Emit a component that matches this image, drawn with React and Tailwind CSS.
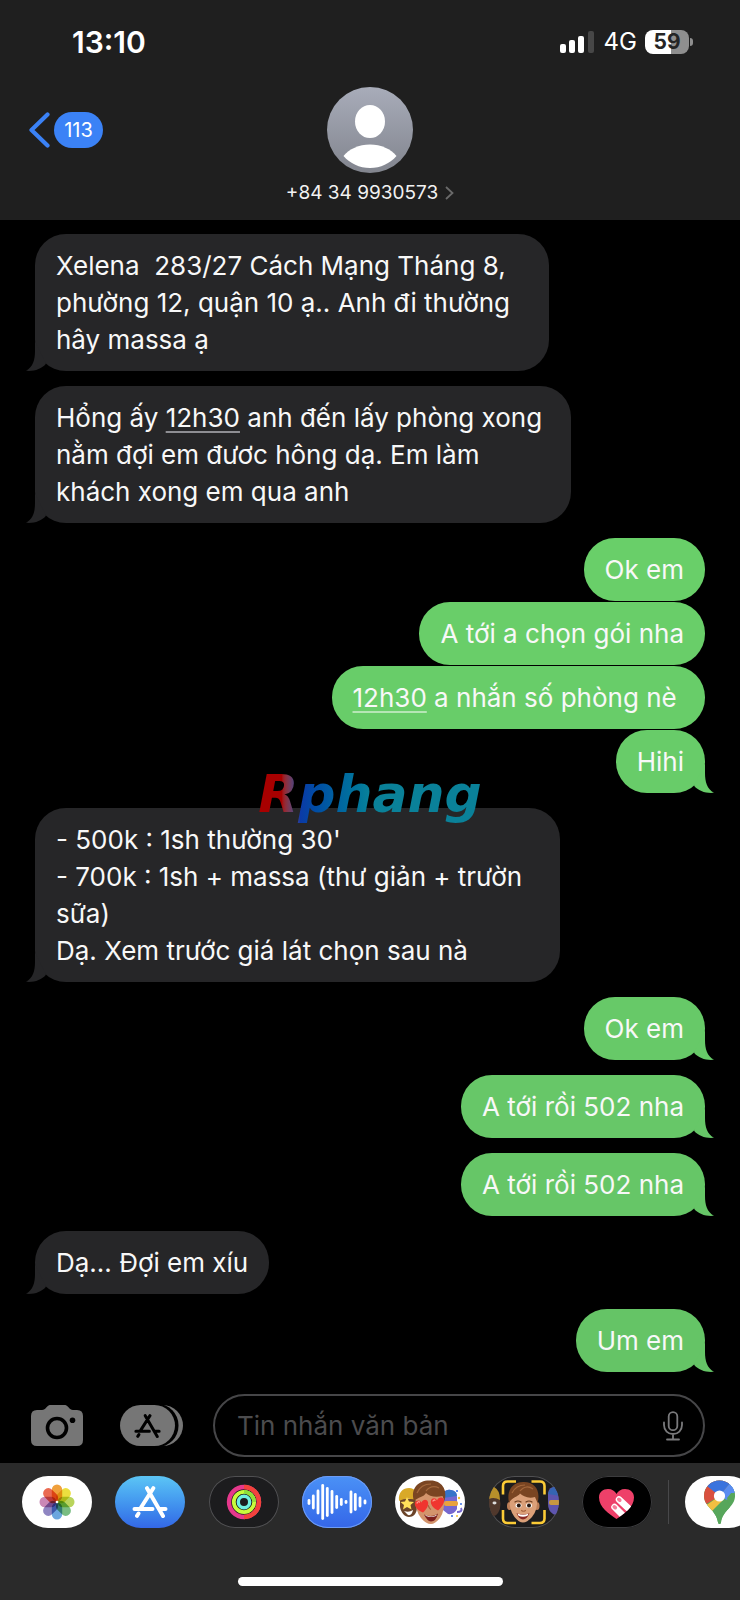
const thread = [
  { from: 'them', tail: true, width: 'w-[514px]', shade: 'bg-[#262628] text-[#262628]', lines: ['Xelena  283/27 Cách Mạng Tháng 8,', 'phường 12, quận 10 ạ.. Anh đi thường', 'hây massa ạ'] },
  { from: 'them', tail: true, width: 'w-[536px]', shade: 'bg-[#262628] text-[#262628]', lines: ['Hổng ấy {12h30} anh đến lấy phòng xong', 'nằm đợi em đươc hông dạ. Em làm', 'khách xong em qua anh'] },
  { from: 'me', shade: 'bg-[#69cf69] text-[#69cf69]', lines: ['Ok em'] },
  { from: 'me', joined: true, shade: 'bg-[#69ce69] text-[#69ce69]', lines: ['A tới a chọn gói nha'] },
  { from: 'me', joined: true, shade: 'bg-[#68cd69] text-[#68cd69]', lines: ['{12h30} a nhắn số phòng nè '] },
  { from: 'me', joined: true, tail: true, shade: 'bg-[#68cc69] text-[#68cc69]', lines: ['Hihi'] },
  { from: 'them', tail: true, watermark: true, width: 'w-[525px]', shade: 'bg-[#262628] text-[#262628]', lines: ["- 500k : 1sh thường 30'", '- 700k : 1sh + massa (thư giản + trườn', 'sữa)', 'Dạ. Xem trước giá lát chọn sau nà'] },
  { from: 'me', tail: true, shade: 'bg-[#67c968] text-[#67c968]', lines: ['Ok em'] },
  { from: 'me', tail: true, shade: 'bg-[#67c768] text-[#67c768]', lines: ['A tới rồi 502 nha'] },
  { from: 'me', tail: true, shade: 'bg-[#66c667] text-[#66c667]', lines: ['A tới rồi 502 nha'] },
  { from: 'them', tail: true, shade: 'bg-[#262628] text-[#262628]', lines: ['Dạ... Đợi em xíu'] },
  { from: 'me', tail: true, shade: 'bg-[#65c466] text-[#65c466]', lines: ['Um em'] },
];

function StatusBar() {
  return (
    <div className="flex h-14 items-end justify-between pl-[72px] pr-[47px]">
      <span className="text-[30px] leading-7 font-semibold text-white">13:10</span>
      <div className="flex h-7 items-center">
        <svg className="h-[22px] w-[34px]" viewBox="0 0 34 22" fill="#fff" aria-hidden="true">
          <rect x="0" y="13" width="6" height="9" rx="2" />
          <rect x="9" y="9" width="6" height="13" rx="2" />
          <rect x="18" y="5" width="6" height="17" rx="2" />
          <rect x="28" y="0" width="6" height="22" rx="2" fill="#474747" />
        </svg>
        <span className="ml-[10px] text-2xl leading-7 text-white">4G</span>
        <div className="ml-2 flex h-6 w-11 items-center justify-center rounded-lg bg-linear-to-r from-white from-59% to-[#8f8f8f] to-59%">
          <span className="text-[21px] leading-6 font-bold text-[#252525]">59</span>
        </div>
        <div className="ml-px h-2 w-[3px] rounded-r-full bg-[#8f8f8f]" />
      </div>
    </div>
  );
}

function Avatar() {
  return (
    <svg className="size-[86px]" viewBox="0 0 86 86" aria-hidden="true">
      <defs>
        <linearGradient id="avatar" x1="0" y1="0" x2="0" y2="1">
          <stop offset="0" stopColor="#a8acb9" />
          <stop offset="1" stopColor="#82858e" />
        </linearGradient>
      </defs>
      <circle cx="43" cy="43" r="43" fill="url(#avatar)" />
      <ellipse cx="43" cy="34.5" rx="15" ry="16.5" fill="#fff" />
      <path d="M16.5 69C22 62 32 57.5 43 57.5S64 62 69.5 69C63 76.5 53.5 81 43 81S23 76.5 16.5 69Z" fill="#fff" />
    </svg>
  );
}

function Header() {
  return (
    <header className="bg-[#1f1f1f] pb-[15px]">
      <StatusBar />
      <div className="mt-[31px] grid grid-cols-[1fr_auto_1fr] items-start">
        <button type="button" aria-label="Back, 113 unread" className="ml-[29px] flex h-[86px] items-center gap-1 justify-self-start">
          <svg className="h-9 w-[21px]" viewBox="0 0 21 36" fill="none" stroke="#3b82f6" strokeWidth="4.2" strokeLinecap="round" strokeLinejoin="round">
            <path d="M18.5 2.5 2.5 18 18.5 33.5" />
          </svg>
          <span className="flex h-9 w-[49px] items-center justify-center rounded-full bg-[#3b82f6] text-xl text-white">113</span>
        </button>
        <button type="button" className="flex flex-col items-center">
          <Avatar />
          <span className="mt-2 flex items-center gap-[6px] text-[19px] leading-6 text-[#f2f2f2]">
            +84 34 9930573
            <svg className="h-4 w-[10px]" viewBox="0 0 10 16" fill="none" stroke="#6a6a6a" strokeWidth="1.8">
              <path d="M2 2 8.5 8 2 14" />
            </svg>
          </span>
        </button>
      </div>
    </header>
  );
}

function Tail({ mine }) {
  return (
    <svg
      className={mine ? 'absolute bottom-0 -right-[9px] size-[30px]' : 'absolute bottom-0 -left-[9px] size-[30px] -scale-x-100'}
      viewBox="0 0 30 30"
      fill="currentColor"
      aria-hidden="true"
    >
      <path d="M21 0V10C21 19 23 26 30 29.8C22 30.6 14.5 28 10 22.7Z" />
    </svg>
  );
}

// {braces} mark a detected time, shown as an underlined link
function Line({ text, mine }) {
  return (
    <span className="block whitespace-pre">
      {text.split(/[{}]/).map((part, i) =>
        i % 2 ? (
          <a key={i} href="#time" className={mine ? 'underline decoration-[#b5e6b5] decoration-2 underline-offset-4' : 'underline decoration-[#8e8e93] decoration-2 underline-offset-4'}>
            {part}
          </a>
        ) : (
          part
        )
      )}
    </span>
  );
}

function Watermark() {
  return (
    <div className="pointer-events-none absolute inset-x-0 -top-[46px] flex justify-center">
      <span className="bg-linear-to-r from-[#a80000] from-12% via-[#0b3aa6] via-20% to-[#0a8199] to-50% bg-clip-text px-1 font-['DejaVu_Sans',sans-serif] text-[52px] leading-[64px] font-bold text-transparent italic">
        Rphang
      </span>
    </div>
  );
}

function Message({ from, lines, shade, width = '', tail, joined, watermark }) {
  const mine = from === 'me';
  return (
    <li className={`relative flex px-[35px] ${mine ? 'justify-end' : ''} ${joined ? 'mt-px' : 'mt-[15px]'}`}>
      <div className={`relative rounded-[31px] px-[21px] py-[13px] ${width} ${shade}`}>
        {tail && <Tail mine={mine} />}
        <p className="relative text-[26px] leading-[37px] text-[#f8f8f8]">
          {lines.map((line) => (
            <Line key={line} text={line} mine={mine} />
          ))}
        </p>
      </div>
      {watermark && <Watermark />}
    </li>
  );
}

function StoreGlyph({ className }) {
  return (
    <svg className={className} viewBox="0 0 36 32" fill="none" stroke="currentColor" strokeWidth="4" strokeLinecap="round" aria-hidden="true">
      <path d="M21.3 2.2 9 21.5M15 2.2 31 30M2.5 23H20.5M28 23H33.5M6.5 27.5 5 29.8" />
    </svg>
  );
}

function Composer() {
  return (
    <form className="flex items-center pt-[22px] pr-[35px] pb-[6px] pl-[31px]">
      <button type="button" aria-label="Camera">
        <svg className="h-[41px] w-[52px]" viewBox="0 0 52 41">
          <path d="M6 5H11C13 5 14 4 15.5 2.2C17 .5 18 0 20 0H33C35 0 36 .5 37.5 2.2C39 4 40 5 42 5H46Q52 5 52 11V35Q52 41 46 41H6Q0 41 0 35V11Q0 5 6 5Z" fill="#767676" />
          <circle cx="26" cy="23" r="9.5" fill="none" stroke="#000" strokeWidth="3.6" />
          <circle cx="41.5" cy="15.3" r="2.8" />
        </svg>
      </button>
      <button type="button" aria-label="Apps" className="ml-[37px] grid items-center">
        <svg className="col-start-1 row-start-1 h-[41px] w-[63px]" viewBox="0 0 63 41">
          <rect x="8" width="55" height="41" rx="20.5" fill="#767676" />
          <rect x="3.5" y="-1" width="55" height="43" rx="21" />
          <rect width="55" height="41" rx="20.5" fill="#767676" />
        </svg>
        <StoreGlyph className="col-start-1 row-start-1 ml-[14px] h-6 w-[27px] text-black" />
      </button>
      <label className="ml-[30px] flex h-[63px] min-w-0 flex-1 items-center rounded-full border-2 border-[#464648] pr-5 pl-[22px]">
        <input
          type="text"
          aria-label="Tin nhắn văn bản"
          placeholder="Tin nhắn văn bản"
          className="min-w-0 flex-1 bg-transparent text-[26px] leading-[37px] text-white outline-none placeholder:text-[#4c4c4e]"
        />
        <svg className="h-[30px] w-5" viewBox="0 0 20 30" fill="none" stroke="#7a7a7c" strokeWidth="1.8" strokeLinecap="round">
          <rect x="5.7" y="1.2" width="8.6" height="18" rx="4.3" />
          <path d="M1 11.5V14C1 19.5 5 23 10 23S19 19.5 19 14V11.5M10 23V28.5M4 28.5H16" />
        </svg>
      </label>
    </form>
  );
}

const petals = ['#f0a03c', '#ecdf3f', '#b9d45c', '#79bd82', '#6ba6de', '#8f86c2', '#ca88b6', '#ea6a52'];

function PhotosIcon() {
  return (
    <svg viewBox="0 0 70 52" className="isolate size-full">
      <g transform="translate(35 26)">
        {petals.map((color, i) => (
          <rect key={color} x="-5.2" y="-17.5" width="10.4" height="17" rx="5.2" fill={color} transform={`rotate(${i * 45})`} className="mix-blend-multiply" />
        ))}
        <circle r="1.3" fill="#fff" />
      </g>
    </svg>
  );
}

function RingsIcon() {
  return (
    <svg viewBox="0 0 70 52" className="size-full" fill="none">
      <circle cx="35" cy="26" r="15" stroke="#e6388c" strokeWidth="4.4" />
      <path d="M35 11A15 15 0 0 1 35 41" stroke="#f2423c" strokeWidth="4.4" />
      <circle cx="35" cy="26" r="10.2" stroke="#c8fb3c" strokeWidth="3.8" />
      <path d="M35 15.8A10.2 10.2 0 0 1 45.2 26" stroke="#8fe03a" strokeWidth="3.8" />
      <circle cx="35" cy="26" r="5.7" stroke="#6ff0e0" strokeWidth="3.4" />
    </svg>
  );
}

const wave = [[7, 6], [11.3, 15], [16, 25], [20.7, 36], [25.3, 30], [30, 24], [34.7, 14], [39.3, 8], [44, 4], [49, 23], [53.3, 18], [58, 11], [63, 5]];

function AudioIcon() {
  return (
    <svg viewBox="0 0 70 52" className="size-full" fill="#fff">
      {wave.map(([x, h]) => (
        <rect key={x} x={x - 1.4} y={26 - h / 2} width="2.8" height={h} rx="1.4" />
      ))}
    </svg>
  );
}

function HeartEyesIcon() {
  return (
    <svg viewBox="0 0 70 52" className="size-full">
      <path d="M5 23H22V31C22 38 18 41 14 41S6 37 5 31Z" fill="#6b4429" />
      <path d="M4 25C3 16 8 12 14 12S24 17 23 25C17 22 10 22 4 25Z" fill="#d9a928" />
      <path d="M12 21 14 25.5 19 26 15.5 29 16.5 33.5 12 31 8 33.5 9 29 5.5 26 10 25.5Z" fill="#ffdf5a" />
      <path d="M9 35Q14 37 18 34Q17 40 13 39Z" fill="#fff" />
      <path d="M48 18Q50 13 56 14T62 21V33Q59 39 53 38L48 34Z" fill="#7668cf" />
      <path d="M48 19Q50 13 56 14T62 20L48 22Z" fill="#3674c9" />
      <rect x="49" y="25" width="14" height="5" rx="2" fill="#e9a23c" />
      <path d="M62 36Q68 36 66 32" fill="none" stroke="#7668cf" strokeWidth="2" />
      <g fill="#3c6fe0">
        <circle cx="62" cy="15" r="1.1" />
        <circle cx="57" cy="40" r="1.1" />
        <circle cx="66" cy="28" r="1" />
      </g>
      <g fill="#f2c230">
        <circle cx="64" cy="22" r="1.2" />
        <circle cx="62" cy="40" r="1" />
      </g>
      <path d="M20.5 21Q21 10 34 9T49 21Q50 35 45 42Q40 48 36 48Q31 48 26 42Q20 35 20.5 21Z" fill="#d3946c" />
      <path d="M19 25C15 12 24 4 35 4.5C46 4 53 13 49.5 25L47.5 20C40 22 34 20 31 17C29 21 23 21 19 25Z" fill="#7a4522" />
      <path d="M22 17C25 10 31 8 36 8M31 15C35 10 40 10 44 12" fill="none" stroke="#a4683c" strokeWidth="1.2" />
      <path d="M33 29Q34.5 33 36 33.5" fill="none" stroke="#a8643f" strokeWidth="1.2" />
      <path d="M29 38.5Q37 42 43 37.5Q41 45.5 36 45.5Q32 45 29 38.5Z" fill="#7c1f1d" />
      <path d="M30 39Q37 42 42 38.5L41 40Q36 42 31 40Z" fill="#fff" />
      <path d="M28 36.5C22 34 19 30 20 26.5C21 24 25 23.5 26.5 26.5C28 23 32 23 33 26C34 29.5 31 34 28 36.5Z" fill="#f0352f" />
      <path d="M43 34.5C38 32 35 28 36 24.5C37 21.5 41 21.5 42 24.5C43 21 47.5 20.5 49 23.5C50 27 46 32 43 34.5Z" fill="#f0352f" />
      <path d="M22 27Q23.5 25 24.5 26M38 25Q39 23.5 40 24.2" fill="none" stroke="#ff9a8d" strokeWidth="1.3" strokeLinecap="round" />
    </svg>
  );
}

function MemojiIcon() {
  return (
    <svg viewBox="0 0 70 52" className="size-full">
      <ellipse cx="4" cy="28" rx="7.5" ry="12" fill="#50382c" />
      <path d="M-2 24C-2 14 1 11 5 11Q11 14 11 24Q4 20-2 24Z" fill="#b8902a" />
      <ellipse cx="5.5" cy="27" rx="2" ry="1.4" fill="#ddd" />
      <path d="M59 17Q60 11 65 11T72 18V34Q68 40 64 38Q59 35 59 28Z" fill="#5e55ae" />
      <path d="M59 18Q61 11 66 11L72 20Z" fill="#3565b2" />
      <rect x="60" y="24" width="12" height="5" rx="2" fill="#c69840" />
      <ellipse cx="20.5" cy="30" rx="2.5" ry="4" fill="#bd7f58" />
      <ellipse cx="48" cy="30" rx="2.5" ry="4" fill="#bd7f58" />
      <path d="M20.5 22Q22 13 34 12T48 22Q49 34 43 41Q38 46.5 34 46.5Q30 46.5 25.5 41Q20 34 20.5 22Z" fill="#dba079" />
      <path d="M20 27C17 13 25 5.5 35 6C46 6 52 15 48.5 27L46 21C39 23 34 20 31 17.5C29 21 23 21 20 27Z" fill="#7a4522" />
      <path d="M23 17C26 11 31 9 36 9M31 15C35 10 40 10 44 13" fill="none" stroke="#a4683c" strokeWidth="1.2" />
      <path d="M26 26Q29 24 32 26M37 26Q40 24 43 26" fill="none" stroke="#6a3c1e" strokeWidth="1.2" strokeLinecap="round" />
      <ellipse cx="29.5" cy="29.5" rx="3" ry="2.2" fill="#fff" />
      <ellipse cx="40" cy="29.5" rx="3" ry="2.2" fill="#fff" />
      <circle cx="29.8" cy="29.5" r="2" fill="#2b1a12" />
      <circle cx="40" cy="29.5" r="2" fill="#2b1a12" />
      <path d="M32.5 34.5Q34.5 36 36.5 34.5" fill="none" stroke="#a8643f" strokeWidth="1.2" strokeLinecap="round" />
      <path d="M27.5 37Q34 40 40.5 37Q38 43.5 34 43.5T27.5 37Z" fill="#8a2a25" />
      <path d="M28.5 37.5Q34 40 39.5 37.5L38.5 39.8Q34 41.5 29.5 39.8Z" fill="#fff" />
      <path d="M14 18.500V10Q14 5.500 18.500 5.500H27M42.500 5.500H51Q55.500 5.500 55.500 10V18.500M55.500 34V42.500Q55.500 47 51 47H42.500M27 47H18.500Q14 47 14 42.500V34" fill="none" stroke="#fbcb36" strokeWidth="2.6" />
    </svg>
  );
}

function TouchIcon() {
  return (
    <svg viewBox="0 0 70 52" className="size-full">
      <defs>
        <clipPath id="heart">
          <path d="M34.5 43C27 38 17 31 17 21.5C17 16 21 13 26 13C30 13 33 15 34.5 18C36 15 39 13 43 13C48 13 52 16 52 21.5C52 31 42 38 34.5 43Z" />
        </clipPath>
      </defs>
      <g clipPath="url(#heart)">
        <rect width="70" height="52" fill="#ee4069" />
        <path d="M37 23.5 52 37.5M32.5 31 45 43.5" stroke="#fff" strokeWidth="6.5" strokeLinecap="round" />
        <path d="M36.8 23.3 37.8 24.2M32.3 30.8 33.3 31.7" stroke="#f57d98" strokeWidth="3.6" strokeLinecap="round" />
      </g>
    </svg>
  );
}

function MapsIcon() {
  return (
    <svg viewBox="0 0 70 52" className="size-full">
      <defs>
        <clipPath id="pin">
          <path d="M34.5 4.5C43 4.5 50 11 50 20C50 31 37.5 34 36 46.5Q35.5 48 34.5 48T33 46.5C31.5 34 19 31 19 20C19 11 26 4.5 34.5 4.5Z" />
        </clipPath>
      </defs>
      <g clipPath="url(#pin)">
        <rect width="70" height="52" fill="#57a65b" />
        <path d="M10 35 34.5 20 46 6 50 0H10Z" fill="#d9503f" />
        <path d="M22 10 34.5 20 46 6 50 0H24Z" fill="#3a73dd" />
        <path d="M46 6 34.5 20 42 24 60 4Z" fill="#5a8df0" />
        <path d="M34.5 20 17 32 22 37 26 36 38 24Z" fill="#f3bf42" />
        <path d="M42 22 56 5 56 16 26 38 30 50H52Z" fill="#57a65b" />
        <path d="M46 6 55 17 44 17Z" fill="#5a8df0" />
      </g>
      <circle cx="34.5" cy="20" r="5.6" fill="#fff" />
    </svg>
  );
}

function AppPill({ label, className, children }) {
  return (
    <button type="button" aria-label={label} className={`flex h-[52px] w-[70px] shrink-0 items-center justify-center overflow-hidden rounded-full ${className}`}>
      {children}
    </button>
  );
}

function Dock() {
  return (
    <footer className="flex flex-1 flex-col items-center justify-between bg-[#2a2a2a] pt-[13px] pb-[14px]">
      <div className="flex w-full items-center overflow-hidden pl-[22px]">
        <div className="flex flex-1 justify-between">
          <AppPill label="Photos" className="bg-white"><PhotosIcon /></AppPill>
          <AppPill label="App Store" className="bg-linear-to-b from-[#5cc5f5] to-[#3467e6] text-white"><StoreGlyph className="h-8 w-9" /></AppPill>
          <AppPill label="Activity" className="bg-[#1c1c1e] ring-1 ring-[#505052] ring-inset"><RingsIcon /></AppPill>
          <AppPill label="Audio" className="bg-linear-to-b from-[#4b91f6] to-[#3566e8] ring-1 ring-[#6d9cf5] ring-inset"><AudioIcon /></AppPill>
          <AppPill label="Memoji stickers" className="bg-white"><HeartEyesIcon /></AppPill>
          <AppPill label="Memoji" className="bg-[#1c1c1e] ring-1 ring-[#505052] ring-inset"><MemojiIcon /></AppPill>
          <AppPill label="Digital Touch" className="bg-black ring-1 ring-[#3c3c3e] ring-inset"><TouchIcon /></AppPill>
        </div>
        <div className="mx-4 h-11 w-px bg-[#48484a]" />
        <AppPill label="Maps" className="-mr-[15px] bg-white"><MapsIcon /></AppPill>
      </div>
      <div className="h-[9px] w-[265px] rounded-full bg-white" />
    </footer>
  );
}

export default function App() {
  return (
    <div className="flex min-h-screen flex-col bg-black font-['Inter',sans-serif]">
      <Header />
      <main>
        <ul className="-mt-px overflow-hidden">
          {thread.map((message, i) => (
            <Message key={i} {...message} />
          ))}
        </ul>
        <Composer />
      </main>
      <Dock />
    </div>
  );
}
